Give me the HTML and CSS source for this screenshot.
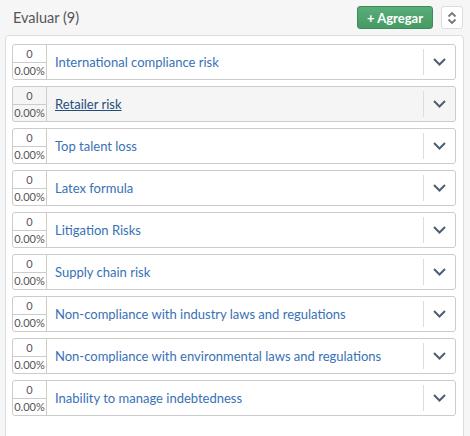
FILE: index.html
```html
<!DOCTYPE html>
<html>
<head>
<meta charset="utf-8">
<link rel="stylesheet" href="styles.css">
</head>
<body>
<div class="header">
  <div class="title">Evaluar (9)</div>
  <button class="add-btn">+ Agregar</button>
  <button class="sort-btn"><svg width="10" height="14" viewBox="0 0 10 14"><path d="M1.5 5.5 L5 2 L8.5 5.5 M1.5 8.5 L5 12 L8.5 8.5" fill="none" stroke="#777" stroke-width="1.8"/></svg></button>
</div>
<div class="panel">
  <div class="row"><div class="num"><span>0</span><span>0.00%</span></div><div class="label">International compliance risk</div><div class="toggle"><svg width="13" height="8" viewBox="0 0 13 8"><path d="M1 1 L6.5 6.5 L12 1" fill="none" stroke="#4d5f73" stroke-width="2"/></svg></div></div>
  <div class="row hover"><div class="num"><span>0</span><span>0.00%</span></div><div class="label">Retailer risk</div><div class="toggle"><svg width="13" height="8" viewBox="0 0 13 8"><path d="M1 1 L6.5 6.5 L12 1" fill="none" stroke="#4d5f73" stroke-width="2"/></svg></div></div>
  <div class="row"><div class="num"><span>0</span><span>0.00%</span></div><div class="label">Top talent loss</div><div class="toggle"><svg width="13" height="8" viewBox="0 0 13 8"><path d="M1 1 L6.5 6.5 L12 1" fill="none" stroke="#4d5f73" stroke-width="2"/></svg></div></div>
  <div class="row"><div class="num"><span>0</span><span>0.00%</span></div><div class="label">Latex formula</div><div class="toggle"><svg width="13" height="8" viewBox="0 0 13 8"><path d="M1 1 L6.5 6.5 L12 1" fill="none" stroke="#4d5f73" stroke-width="2"/></svg></div></div>
  <div class="row"><div class="num"><span>0</span><span>0.00%</span></div><div class="label">Litigation Risks</div><div class="toggle"><svg width="13" height="8" viewBox="0 0 13 8"><path d="M1 1 L6.5 6.5 L12 1" fill="none" stroke="#4d5f73" stroke-width="2"/></svg></div></div>
  <div class="row"><div class="num"><span>0</span><span>0.00%</span></div><div class="label">Supply chain risk</div><div class="toggle"><svg width="13" height="8" viewBox="0 0 13 8"><path d="M1 1 L6.5 6.5 L12 1" fill="none" stroke="#4d5f73" stroke-width="2"/></svg></div></div>
  <div class="row"><div class="num"><span>0</span><span>0.00%</span></div><div class="label">Non-compliance with industry laws and regulations</div><div class="toggle"><svg width="13" height="8" viewBox="0 0 13 8"><path d="M1 1 L6.5 6.5 L12 1" fill="none" stroke="#4d5f73" stroke-width="2"/></svg></div></div>
  <div class="row"><div class="num"><span>0</span><span>0.00%</span></div><div class="label">Non-compliance with environmental laws and regulations</div><div class="toggle"><svg width="13" height="8" viewBox="0 0 13 8"><path d="M1 1 L6.5 6.5 L12 1" fill="none" stroke="#4d5f73" stroke-width="2"/></svg></div></div>
  <div class="row"><div class="num"><span>0</span><span>0.00%</span></div><div class="label">Inability to manage indebtedness</div><div class="toggle"><svg width="13" height="8" viewBox="0 0 13 8"><path d="M1 1 L6.5 6.5 L12 1" fill="none" stroke="#4d5f73" stroke-width="2"/></svg></div></div>
</div>
</body>
</html>
```
FILE: styles.css
```css
* { box-sizing: border-box; }
html, body { height: 100%; }
body {
  margin: 0;
  background: #f6f6f6;
  font-family: Lato, "Open Sans", sans-serif;
  overflow: hidden;
}
.header {
  height: 35px;
  display: flex;
  align-items: center;
  padding: 0 7px 0 13px;
}
.title {
  flex: 1;
  font-size: 14.5px;
  color: #555;
}
.add-btn {
  width: 76px;
  height: 23px;
  margin-right: 8px;
  background: linear-gradient(#58ad79, #469a63);
  border: 1px solid #3e8b5a;
  border-radius: 3px;
  color: #fff;
  font-family: Lato, sans-serif;
  font-weight: bold;
  font-size: 13px;
  padding: 0;
}
.sort-btn {
  width: 22px;
  height: 23px;
  background: #fff;
  border: 1px solid #ddd;
  border-radius: 3px;
  padding: 0;
  display: flex;
  align-items: center;
  justify-content: center;
}
.panel {
  margin: 0 6px 0 5px;
  height: 420px;
  background: #fff;
  border: 1px solid #ddd;
  border-radius: 4px;
  padding: 8px 7px 0 6px;
  display: flex;
  flex-direction: column;
  gap: 6px;
}
.row {
  height: 36px;
  flex: none;
  display: flex;
  border: 1px solid #ccc;
  border-radius: 3px;
  background: #fff;
}
.row.hover { background: #f5f5f5; }
.num {
  width: 34px;
  border-right: 1px solid #ccc;
  display: flex;
  flex-direction: column;
  font-size: 11px;
  color: #555;
  text-align: center;
}
.num span {
  flex: 1;
  display: flex;
  align-items: center;
  justify-content: center;
}
.num span + span { border-top: 1px solid #ccc; }
.label {
  flex: 1;
  display: flex;
  align-items: center;
  padding-left: 8px;
  font-size: 13px;
  color: #3771b6;
}
.row.hover .label {
  color: #1f4e7c;
  text-decoration: underline;
}
.toggle {
  width: 32px;
  margin: 4px 0;
  border-left: 1px solid #ddd;
  display: flex;
  align-items: center;
  justify-content: center;
}
```
